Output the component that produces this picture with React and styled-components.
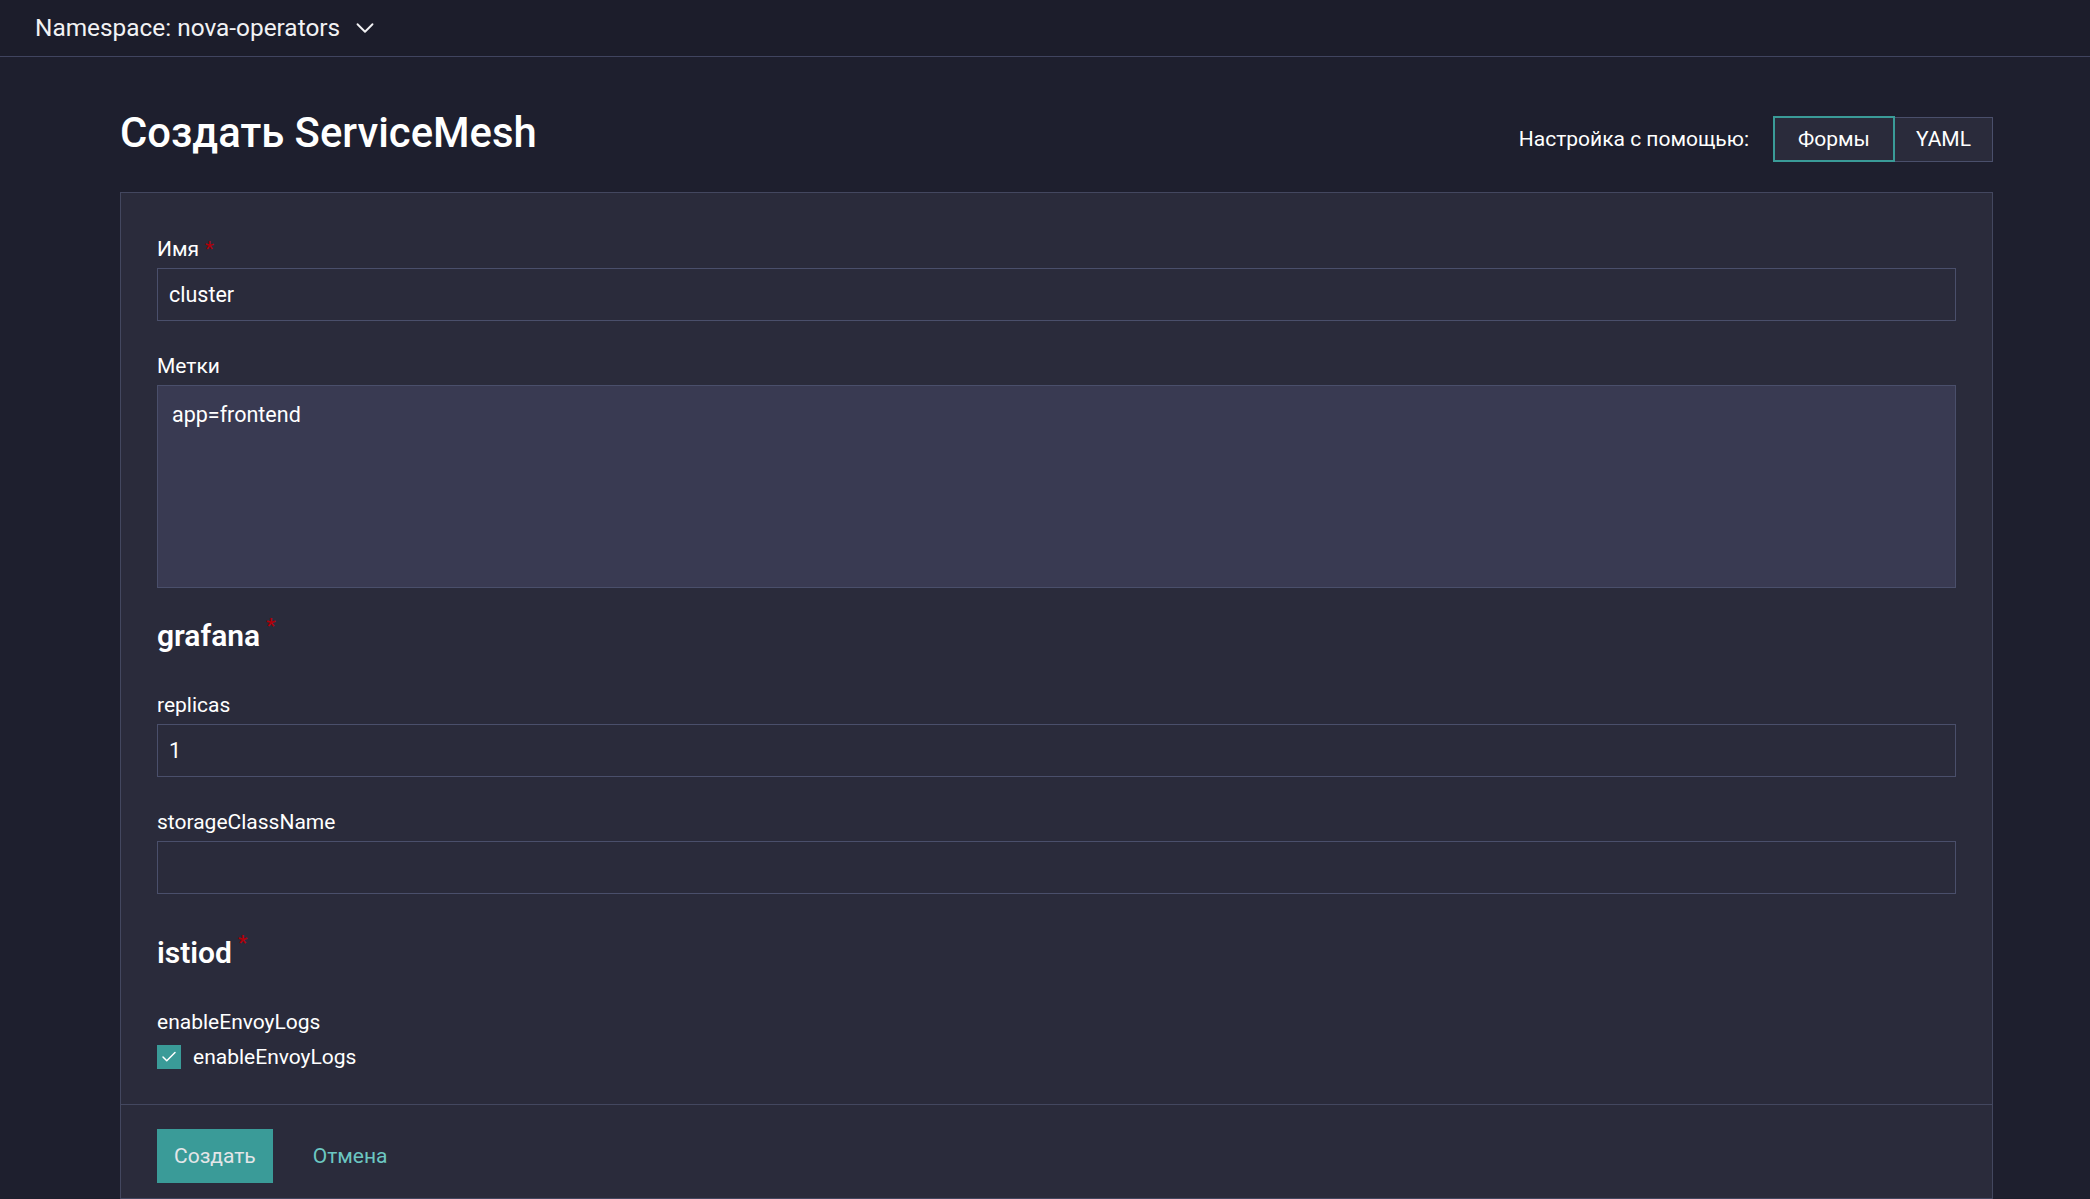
import React from "react";
import styled, { createGlobalStyle } from "styled-components";
import { ChevronDown, Check } from "lucide-react";

const C = {
  page: "#1e1f2e",
  bar: "#1c1d2b",
  barLine: "#40445f",
  panel: "#2a2b3b",
  panelLine: "#43475f",
  field: "#2a2b3b",
  fieldLine: "#4a4f6b",
  area: "#393a52",
  text: "#ffffff",
  teal: "#3a9b98",
  link: "#6cc7c2",
  req: "#b0000a",
};

const Global = createGlobalStyle`
  html, body { margin: 0; padding: 0; }
  body {
    background: ${C.page};
    color: ${C.text};
    font-family: Roboto, "Noto Sans", "Liberation Sans", sans-serif;
    overflow: hidden;
    height: 1199px;
  }
  * { box-sizing: border-box; }
`;

const Page = styled.div`
  width: 2090px;
  height: 1199px;
  display: flex;
  flex-direction: column;
  overflow: hidden;
`;

const TopBar = styled.header`
  height: 57px;
  flex: none;
  display: flex;
  align-items: center;
  padding: 0 0 0 35px;
  background: ${C.bar};
  border-bottom: 1px solid ${C.barLine};
`;

const NamespaceButton = styled.div`
  display: flex;
  align-items: center;
  gap: 10px;
  font-size: 24.4px;
  line-height: 30px;
  color: #f2f2f4;
`;

const Main = styled.main`
  flex: 1;
  min-height: 0;
  display: flex;
  flex-direction: column;
  padding: 54px 97px 0 120px;
`;

const HeaderRow = styled.div`
  display: flex;
  align-items: center;
  justify-content: space-between;
  height: 56px;
  margin-bottom: 25px;
`;

const Title = styled.h1`
  margin: 0 0 12px;
  font-size: 41.8px;
  line-height: 50px;
  font-weight: 500;
  color: #ffffff;
`;

const ToggleGroup = styled.div`
  display: flex;
  align-items: center;
  gap: 24px;
`;

const ToggleLabel = styled.span`
  font-size: 21px;
  color: #ffffff;
`;

const ToggleButtons = styled.div`
  display: flex;
  align-items: center;
`;

const ToggleButton = styled.button`
  font-family: inherit;
  font-size: 21px;
  color: #ffffff;
  background: ${C.panel};
  cursor: pointer;
  height: ${(p) => (p.$active ? "46px" : "45px")};
  width: ${(p) => p.$w}px;
  border: ${(p) => (p.$active ? `2px solid ${C.teal}` : `1px solid ${C.fieldLine}`)};
  border-left-width: ${(p) => (p.$active ? "2px" : "0")};
  padding: 0;
`;

const Panel = styled.section`
  display: flex;
  flex-direction: column;
  background: ${C.panel};
  border: 1px solid ${C.panelLine};
  flex: 1;
  min-height: 0;
`;

const FormBody = styled.div`
  height: 911px;
  flex: none;
  overflow: hidden;
  padding: 41px 36px 0;
  display: flex;
  flex-direction: column;
`;

const Field = styled.div`
  display: flex;
  flex-direction: column;
  gap: 4px;
  margin-bottom: 30px;
`;

const Label = styled.label`
  font-size: 21px;
  line-height: 30px;
  font-weight: 400;
  color: #ffffff;
`;

const Req = styled.span`
  color: ${C.req};
  margin-left: 6px;
  font-size: 21px;
  ${(p) => p.$raised && "vertical-align: top; line-height: 1;"}
`;

const TextInput = styled.input`
  height: 53px;
  width: 100%;
  padding: 0 11px;
  background: ${C.field};
  border: 1px solid ${C.fieldLine};
  color: #ffffff;
  font-family: inherit;
  font-size: 21.5px;
  outline: none;
`;

const TextArea = styled.textarea`
  height: 203px;
  width: 100%;
  padding: 14px 14px;
  background: ${C.area};
  border: 1px solid ${C.fieldLine};
  color: #ffffff;
  font-family: inherit;
  font-size: 21.5px;
  line-height: 30px;
  resize: none;
  outline: none;
  display: block;
`;

const Section = styled.div`
  display: flex;
  flex-direction: column;
  margin-top: ${(p) => p.$top}px;
`;

const SectionTitle = styled.h2`
  margin: 0 0 34px;
  font-size: 30px;
  line-height: 40px;
  font-weight: 600;
  color: #ffffff;
`;

const CheckRow = styled.div`
  display: flex;
  align-items: center;
  gap: 12px;
  margin-top: 1px;
`;

const CheckBox = styled.span`
  width: 24px;
  height: 24px;
  background: ${C.teal};
  display: flex;
  align-items: center;
  justify-content: center;
  color: #ffffff;
`;

const CheckText = styled.span`
  font-size: 21px;
  line-height: 30px;
  color: #ffffff;
`;

const Footer = styled.div`
  flex: none;
  border-top: 1px solid ${C.panelLine};
  padding: 24px 36px;
  display: flex;
  align-items: center;
  gap: 20px;
`;

const PrimaryButton = styled.button`
  height: 54px;
  padding: 0 17px;
  background: ${C.teal};
  border: none;
  color: #e4e6e8;
  font-family: inherit;
  font-size: 21px;
  cursor: pointer;
`;

const LinkButton = styled.button`
  height: 54px;
  padding: 0 20px;
  background: transparent;
  border: none;
  color: ${C.link};
  font-family: inherit;
  font-size: 21px;
  cursor: pointer;
`;

export default function App() {
  return (
    <>
      <Global />
      <Page>
        <TopBar>
          <NamespaceButton>
            Namespace: nova-operators
            <ChevronDown size={30} strokeWidth={1.5} color="#f2f2f4" />
          </NamespaceButton>
        </TopBar>
        <Main>
          <HeaderRow>
            <Title>Создать ServiceMesh</Title>
            <ToggleGroup>
              <ToggleLabel>Настройка с помощью:</ToggleLabel>
              <ToggleButtons>
                <ToggleButton $active $w={122}>Формы</ToggleButton>
                <ToggleButton $w={98}>YAML</ToggleButton>
              </ToggleButtons>
            </ToggleGroup>
          </HeaderRow>
          <Panel>
            <FormBody>
              <Field>
                <Label>
                  Имя<Req>*</Req>
                </Label>
                <TextInput defaultValue="cluster" />
              </Field>
              <Field>
                <Label>Метки</Label>
                <TextArea defaultValue="app=frontend" />
              </Field>
              <Section $top={-2}>
                <SectionTitle>
                  grafana<Req $raised>*</Req>
                </SectionTitle>
                <Field>
                  <Label>replicas</Label>
                  <TextInput defaultValue="1" />
                </Field>
                <Field>
                  <Label>storageClassName</Label>
                  <TextInput defaultValue="" />
                </Field>
              </Section>
              <Section $top={9}>
                <SectionTitle>
                  istiod<Req $raised>*</Req>
                </SectionTitle>
                <Field>
                  <Label>enableEnvoyLogs</Label>
                  <CheckRow>
                    <CheckBox>
                      <Check size={18} strokeWidth={2} />
                    </CheckBox>
                    <CheckText>enableEnvoyLogs</CheckText>
                  </CheckRow>
                </Field>
              </Section>
            </FormBody>
            <Footer>
              <PrimaryButton>Создать</PrimaryButton>
              <LinkButton>Отмена</LinkButton>
            </Footer>
          </Panel>
        </Main>
      </Page>
    </>
  );
}
